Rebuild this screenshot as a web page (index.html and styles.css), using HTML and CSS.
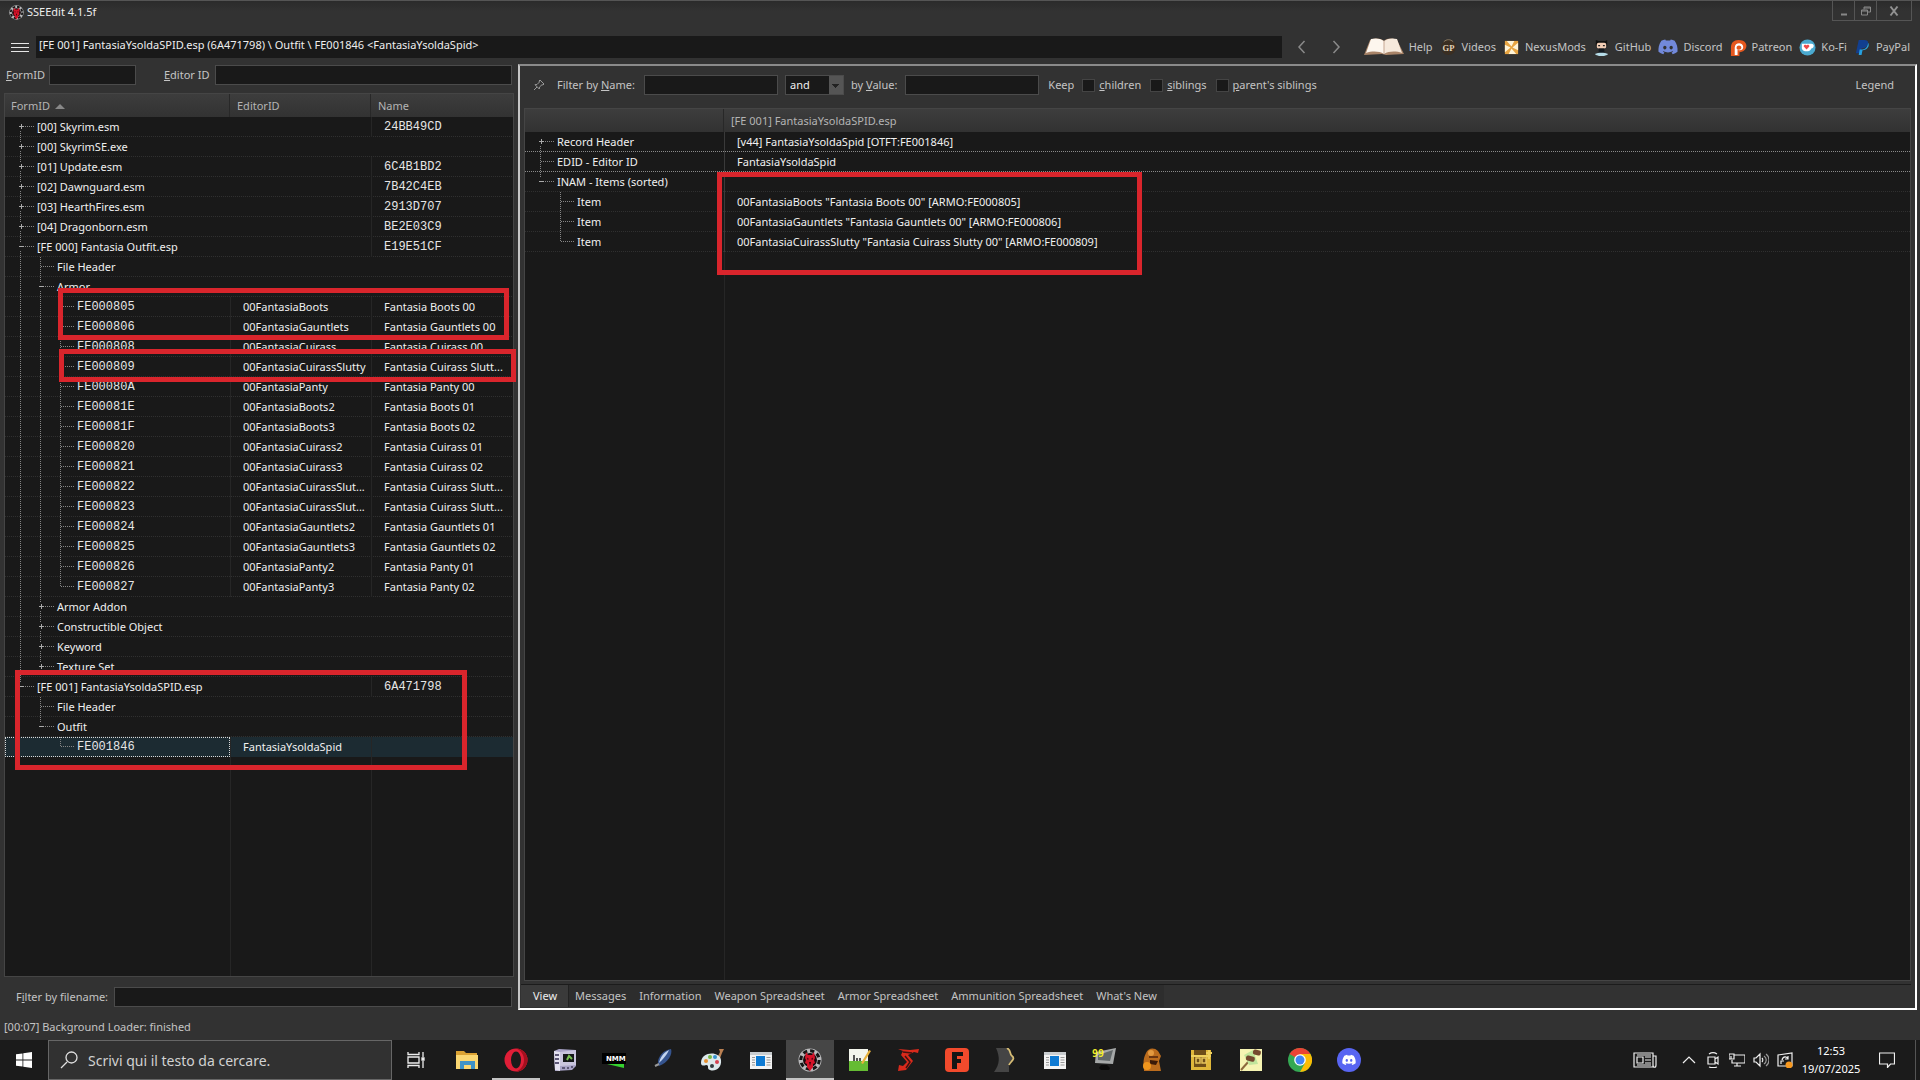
FILE: index.html
```html
<!DOCTYPE html>
<html lang="en">
<head>
<meta charset="utf-8">
<title>SSEEdit 4.1.5f</title>
<link rel="stylesheet" href="styles.css">
</head>
<body>
<svg class="defs" width="0" height="0" aria-hidden="true">
  <symbol id="gear" viewBox="0 0 24 24"><circle cx="12" cy="12" r="11.500" fill="#b9b9bb"/><circle cx="12" cy="12" r="9.200" fill="none" stroke="#161616" stroke-width="3" stroke-dasharray="4.200 3"/><circle cx="12" cy="12" r="7" fill="#1b0a0d"/><path d="M8 4l2 3h4l2-3 1 6-1 2 1 3-2 1v3l-3 4-3-4v-3l-2-1 1-3-1-2z" fill="#d51329"/><path d="M9 9.500l2 1.500-1.500 1zM15 9.500L13 11l1.500 1zM11 14h2l-1 4z" fill="#3a040c"/></symbol>
  <symbol id="discord" viewBox="0 0 24 24"><path d="M20 4.600A19 19 0 0 0 15.300 3l-.7 1.300a17 17 0 0 0-5.200 0L8.700 3A19 19 0 0 0 4 4.600C1 9 .2 13.400.6 17.700A19 19 0 0 0 6.400 20.600l1.300-2-1.900-1 .5-.4a13.500 13.500 0 0 0 11.400 0l.5.4-1.900 1 1.300 2a19 19 0 0 0 5.800-2.900C23.900 12.700 22.600 8.400 20 4.600zM8.200 15c-1.100 0-2-1-2-2.300s.9-2.300 2-2.300 2.100 1 2 2.300c0 1.300-.9 2.300-2 2.300zm7.600 0c-1.100 0-2-1-2-2.300s.9-2.300 2-2.300 2.100 1 2 2.300c0 1.300-.9 2.300-2 2.300z"/></symbol>
  <symbol id="window" viewBox="0 0 24 24"><rect x="1" y="4" width="22" height="17" fill="#f3f3f3"/><rect x="1" y="4" width="22" height="3" fill="#c9cdd0"/><rect x="7" y="8" width="9" height="10" fill="#0e7ad3"/><path d="M3 9.500h3M3 12h3M3 14.500h3M3 17h3M17.500 9.500h4M17.500 12h4M17.500 14.500h4M17.500 17h4" stroke="#999"/></symbol>
</svg>

<header class="titlebar">
  <svg class="app-icon"><use href="#gear"/></svg>
  <h1>SSEEdit 4.1.5f</h1>
  <div class="window-buttons">
    <button aria-label="Minimize"><svg viewBox="0 0 12 12"><path d="M3 9.500h6" stroke="#888" stroke-width="2"/></svg></button>
    <button aria-label="Restore"><svg viewBox="0 0 12 12" fill="none" stroke="#888"><path d="M1.500 5h6v5h-6zM1.500 6h6M4 4.500V2h6.500v5H8M4 3h6.500"/></svg></button>
    <button class="close" aria-label="Close"><svg viewBox="0 0 12 12"><path d="M2.500 1.500l7 9M9.500 1.500l-7 9" stroke="#929292" stroke-width="2"/></svg></button>
  </div>
</header>

<nav class="toolbar">
  <button class="menu" aria-label="Menu"><i></i><i></i><i></i></button>
  <input class="path" aria-label="Path" value="[FE 001] FantasiaYsoldaSPID.esp (6A471798) \ Outfit \ FE001846 &lt;FantasiaYsoldaSpid&gt;">
  <div class="history">
    <button aria-label="Back"><svg viewBox="0 0 10 14"><path d="M7.500 1L2 7l5.500 6"/></svg></button>
    <button aria-label="Forward"><svg viewBox="0 0 10 14"><path d="M2.500 1L8 7l-5.500 6"/></svg></button>
  </div>
  <div class="links">
    <a href="#help"><svg class="book" viewBox="0 0 40 18"><path d="M6 2L0 17l18-1 4 1 18-1L33 2c-5-2-10-2-13 1C16 0 11 0 6 2z" fill="#a98468"/><path d="M7 1L2 15c6-2 13-2 18 1V3C16 0 11 0 7 1z" fill="#fdf6ee"/><path d="M33 1l5 14c-6-2-13-2-18 1V3c4-3 9-3 13-2z" fill="#f6e9dc"/><path d="M20 3v13" stroke="#c6a893"/></svg>Help</a>
    <a href="#videos"><svg viewBox="0 0 18 18"><circle cx="9" cy="9" r="8" fill="#3a2e22"/><path d="M4 3c3-3 7-3 10 0" stroke="#8e7c62" fill="none"/><text x="9" y="13" text-anchor="middle" class="gp">GP</text></svg>Videos</a>
    <a href="#nexus"><svg viewBox="0 0 18 18"><rect x="2" y="2" width="14" height="14" fill="#e8a542"/><path d="M4 2l5 6 3-6zM16 4l-6 5 6 3zM14 16l-5-6-3 6zM2 14l6-5-6-3z" fill="#fff4d8"/></svg>NexusMods</a>
    <a class="github" href="#github"><svg viewBox="0 0 18 18"><path d="M3 1l3 1h7l2-1v7H3z" fill="#111"/><rect x="4" y="4" width="10" height="6" rx="2" fill="#f2cdb5"/><path d="M5.500 7h2M10.500 7h2" stroke="#222" stroke-width="1.500"/><path d="M6 10h6v6H6z" fill="#141a20"/><path d="M2 16c4-2 10-2 14 0-3 3-11 3-14 0z" fill="#b6dce8"/></svg>GitHub</a>
    <a href="#discord"><svg class="wide blurple"><use href="#discord"/></svg>Discord</a>
    <a href="#patreon"><svg viewBox="0 0 18 18"><path d="M1 9C1 4 4 1 9 1c12 0 10 13 1 13v4H1z" fill="#e5571e"/><path d="M5 17V9c0-6 9-6 9-.5C14 12 10 13 8 11v6z" fill="#fff"/><path d="M7 9c0-3 5-3 5 0s-4 3-5 1z" fill="#e5571e"/></svg>Patreon</a>
    <a href="#kofi"><svg viewBox="0 0 18 18"><circle cx="9" cy="9" r="8.500" fill="#4aa9cf"/><path d="M3 5h10c4 0 3 5 0 5-1 4-9 4-10 0z" fill="#fff"/><path d="M8 11L5 8c0-3 3-2 3-1 0-1 3-2 3 1z" fill="#ee4b4b"/></svg>Ko-Fi</a>
    <a href="#paypal"><svg viewBox="0 0 18 18"><path d="M5 1h6c4 0 5 3 3 6s-4 3-6 3l-1 5H2z" fill="#123f90"/><path d="M15 4c2 3-1 8-6 8l-1 5H5l1-6h3c3 0 5-2 6-7z" fill="#26a0e0"/></svg>PayPal</a>
  </div>
</nav>

<main>
<section class="left">
  <form class="id-filters">
    <label for="formid"><u>F</u>ormID</label><input id="formid" class="formid">
    <label for="editorid" class="second"><u>E</u>ditor ID</label><input id="editorid" class="grow">
  </form>
  <div class="grid-box">
    <table class="files">
      <colgroup><col class="c1"><col class="c2"><col></colgroup>
      <thead><tr><th>FormID <i class="sort"></i></th><th>EditorID</th><th>Name</th></tr></thead>
      <tbody>
      <tr><td colspan="2"><div class="node"><i class="b plus first"></i>[00] Skyrim.esm</div></td><td class="mono">24BB49CD</td></tr>
      <tr><td colspan="3"><div class="node"><i class="b plus"></i>[00] SkyrimSE.exe</div></td></tr>
      <tr><td colspan="2"><div class="node"><i class="b plus"></i>[01] Update.esm</div></td><td class="mono">6C4B1BD2</td></tr>
      <tr><td colspan="2"><div class="node"><i class="b plus"></i>[02] Dawnguard.esm</div></td><td class="mono">7B42C4EB</td></tr>
      <tr><td colspan="2"><div class="node"><i class="b plus"></i>[03] HearthFires.esm</div></td><td class="mono">2913D707</td></tr>
      <tr><td colspan="2"><div class="node"><i class="b plus"></i>[04] Dragonborn.esm</div></td><td class="mono">BE2E03C9</td></tr>
      <tr><td colspan="2"><div class="node"><i class="b minus"></i>[FE 000] Fantasia Outfit.esp</div></td><td class="mono">E19E51CF</td></tr>
      <tr><td colspan="3"><div class="node"><i class="g"></i><i class="b"></i>File Header</div></td></tr>
      <tr><td colspan="3"><div class="node"><i class="g"></i><i class="b minus"></i>Armor</div></td></tr>
      <tr><td><div class="node mono"><i class="g"></i><i class="g"></i><i class="b"></i>FE000805</div></td><td>00FantasiaBoots</td><td>Fantasia Boots 00</td></tr>
      <tr><td><div class="node mono"><i class="g"></i><i class="g"></i><i class="b"></i>FE000806</div></td><td>00FantasiaGauntlets</td><td>Fantasia Gauntlets 00</td></tr>
      <tr><td><div class="node mono"><i class="g"></i><i class="g"></i><i class="b"></i>FE000808</div></td><td>00FantasiaCuirass</td><td>Fantasia Cuirass 00</td></tr>
      <tr><td><div class="node mono"><i class="g"></i><i class="g"></i><i class="b"></i>FE000809</div></td><td>00FantasiaCuirassSlutty</td><td>Fantasia Cuirass Slutt...</td></tr>
      <tr><td><div class="node mono"><i class="g"></i><i class="g"></i><i class="b"></i>FE00080A</div></td><td>00FantasiaPanty</td><td>Fantasia Panty 00</td></tr>
      <tr><td><div class="node mono"><i class="g"></i><i class="g"></i><i class="b"></i>FE00081E</div></td><td>00FantasiaBoots2</td><td>Fantasia Boots 01</td></tr>
      <tr><td><div class="node mono"><i class="g"></i><i class="g"></i><i class="b"></i>FE00081F</div></td><td>00FantasiaBoots3</td><td>Fantasia Boots 02</td></tr>
      <tr><td><div class="node mono"><i class="g"></i><i class="g"></i><i class="b"></i>FE000820</div></td><td>00FantasiaCuirass2</td><td>Fantasia Cuirass 01</td></tr>
      <tr><td><div class="node mono"><i class="g"></i><i class="g"></i><i class="b"></i>FE000821</div></td><td>00FantasiaCuirass3</td><td>Fantasia Cuirass 02</td></tr>
      <tr><td><div class="node mono"><i class="g"></i><i class="g"></i><i class="b"></i>FE000822</div></td><td>00FantasiaCuirassSlut...</td><td>Fantasia Cuirass Slutt...</td></tr>
      <tr><td><div class="node mono"><i class="g"></i><i class="g"></i><i class="b"></i>FE000823</div></td><td>00FantasiaCuirassSlut...</td><td>Fantasia Cuirass Slutt...</td></tr>
      <tr><td><div class="node mono"><i class="g"></i><i class="g"></i><i class="b"></i>FE000824</div></td><td>00FantasiaGauntlets2</td><td>Fantasia Gauntlets 01</td></tr>
      <tr><td><div class="node mono"><i class="g"></i><i class="g"></i><i class="b"></i>FE000825</div></td><td>00FantasiaGauntlets3</td><td>Fantasia Gauntlets 02</td></tr>
      <tr><td><div class="node mono"><i class="g"></i><i class="g"></i><i class="b"></i>FE000826</div></td><td>00FantasiaPanty2</td><td>Fantasia Panty 01</td></tr>
      <tr><td><div class="node mono"><i class="g"></i><i class="g"></i><i class="b last"></i>FE000827</div></td><td>00FantasiaPanty3</td><td>Fantasia Panty 02</td></tr>
      <tr><td colspan="3"><div class="node"><i class="g"></i><i class="b plus"></i>Armor Addon</div></td></tr>
      <tr><td colspan="3"><div class="node"><i class="g"></i><i class="b plus"></i>Constructible Object</div></td></tr>
      <tr><td colspan="3"><div class="node"><i class="g"></i><i class="b plus"></i>Keyword</div></td></tr>
      <tr><td colspan="3"><div class="node"><i class="g"></i><i class="b plus last"></i>Texture Set</div></td></tr>
      <tr><td colspan="2"><div class="node"><i class="b minus last"></i>[FE 001] FantasiaYsoldaSPID.esp</div></td><td class="mono">6A471798</td></tr>
      <tr><td colspan="3"><div class="node"><i class="g none"></i><i class="b"></i>File Header</div></td></tr>
      <tr><td colspan="3"><div class="node"><i class="g none"></i><i class="b minus last"></i>Outfit</div></td></tr>
      <tr class="selected"><td class="focus"><div class="node mono"><i class="g none"></i><i class="g none"></i><i class="b last"></i>FE001846</div></td><td>FantasiaYsoldaSpid</td><td></td></tr>
      </tbody>
    </table>
    <div class="filler files-filler"><i></i><i></i><i></i></div>
  </div>
  <form class="file-filter"><label for="fname">F<u>i</u>lter by filename:</label><input id="fname" class="grow"></form>
</section>

<section class="right">
  <form class="filters">
    <svg class="pin" viewBox="0 0 12 12"><path d="M7 1l4 4-1 1-1-.3L6.500 8l-.2 2L2 5.700l2-.2L6.500 3 6 2zM4 8l-3 3"/></svg>
    <label class="by-name" for="fn">Filter by <u>N</u>ame:</label><input id="fn" class="term">
    <select aria-label="Operator"><option>and</option></select>
    <label class="by-value" for="fv">by <u>V</u>alue:</label><input id="fv" class="term">
    <span class="keep">Keep</span>
    <label class="check"><input type="checkbox"><span><u>c</u>hildren</span></label>
    <label class="check"><input type="checkbox"><span><u>s</u>iblings</span></label>
    <label class="check"><input type="checkbox"><span><u>p</u>arent's siblings</span></label>
    <button type="button" class="legend">Legend</button>
  </form>
  <div class="grid-box record-box">
    <table class="record">
      <colgroup><col class="r1"><col></colgroup>
      <thead><tr><th></th><th>[FE 001] FantasiaYsoldaSPID.esp</th></tr></thead>
      <tbody>
      <tr class="bright"><td><div class="node"><i class="b plus first"></i>Record Header</div></td><td>[v44] FantasiaYsoldaSpid [OTFT:FE001846]</td></tr>
      <tr class="bright"><td><div class="node"><i class="b"></i>EDID - Editor ID</div></td><td>FantasiaYsoldaSpid</td></tr>
      <tr><td><div class="node"><i class="b minus last"></i>INAM - Items (sorted)</div></td><td></td></tr>
      <tr><td><div class="node"><i class="g none"></i><i class="b"></i>Item</div></td><td>00FantasiaBoots "Fantasia Boots 00" [ARMO:FE000805]</td></tr>
      <tr><td><div class="node"><i class="g none"></i><i class="b"></i>Item</div></td><td>00FantasiaGauntlets "Fantasia Gauntlets 00" [ARMO:FE000806]</td></tr>
      <tr><td><div class="node"><i class="g none"></i><i class="b last"></i>Item</div></td><td>00FantasiaCuirassSlutty "Fantasia Cuirass Slutty 00" [ARMO:FE000809]</td></tr>
      </tbody>
    </table>
    <div class="filler record-filler"><i></i><i></i></div>
  </div>
  <div class="tabs">
    <button class="active">View</button><button>Messages</button><button>Information</button><button>Weapon Spreadsheet</button><button>Armor Spreadsheet</button><button>Ammunition Spreadsheet</button><button>What's New</button>
  </div>
</section>
</main>

<p class="status">[00:07] Background Loader: finished</p>

<footer class="taskbar">
  <button class="start" aria-label="Start"><svg viewBox="0 0 16 16" fill="#fff"><path d="M0 2.300L6.500 1.400v6.200H0zM7.300 1.300L16 0v7.600H7.300zM0 8.400h6.500v6.200L0 13.700zM7.300 8.400H16V16l-8.700-1.300z"/></svg></button>
  <label class="search"><svg viewBox="0 0 18 18"><path d="M1 17l6-6M17 6.500a5.500 5.500 0 1 1-11 0 5.500 5.500 0 0 1 11 0z"/></svg><input aria-label="Search" placeholder="Scrivi qui il testo da cercare."></label>
  <button class="taskview" aria-label="Task view"><svg viewBox="0 0 18 18" fill="none" stroke="#eee" stroke-width="1.300"><path d="M1 1v2.500h11V1M1 17v-2.500h11V17M1 6h11v6H1zM16 1v5M16 10v7"/><path d="M15 7h2v2h-2z" fill="#eee"/></svg></button>
  <div class="apps">
    <button aria-label="File Explorer"><svg viewBox="0 0 24 24"><path d="M1 3h8l2 2h11v16H1z" fill="#dba233"/><path d="M1 7h22v14H1z" fill="#fbd772"/><path d="M5 21v-8h15v8h-4v-4h-7v4z" fill="#3f93c8"/></svg></button>
    <button class="running" aria-label="Opera"><svg viewBox="0 0 24 24"><circle cx="12" cy="12" r="11.500" fill="#e01e37"/><path d="M12 .5a11.500 11.500 0 0 1 0 23c5-2 8-6 8-11.500S17 2.500 12 .5z" fill="#a3101f"/><ellipse cx="12" cy="12" rx="5" ry="8.500" fill="#1b1b1b"/></svg></button>
    <button aria-label="Media tool"><svg viewBox="0 0 24 24"><path d="M1 3l5-2 17 1v16l-4 4-17 1z" fill="#a9a4c8"/><path d="M1 3l6 1v19l-5-1z" fill="#e4e2f0"/><path d="M7 4l16-2v15l-16 1z" fill="#c9c5de"/><rect x="10" y="6" width="11" height="8" fill="#15181a"/><path d="M14 12l2-4 3 3" stroke="#79c253" fill="none" stroke-width="2"/><path d="M2 7h4M2 11h4M2 15h4M9 20h3M14 20h2M18 19h2" stroke="#5d5877" stroke-width="2"/></svg></button>
    <button aria-label="NMM"><svg viewBox="0 0 24 24"><path d="M0 5h24v11H0z" fill="#000"/><text class="nmm" x="4" y="13">NMM</text><path d="M5 16h17v4z" fill="#36d32f"/></svg></button>
    <button aria-label="Quill"><svg viewBox="0 0 24 24"><path d="M20 1c2 5-3 14-12 17-3-3 0-15 12-17z" fill="#35548f"/><path d="M18 2c-6 3-9 8-10 13 3-3 8-8 10-13z" fill="#c3d5f0"/><path d="M4 18l4-2" stroke="#999" stroke-width="2"/></svg></button>
    <button aria-label="Paint"><svg viewBox="0 0 24 24"><path d="M17 10l3-6-1-3h5l-2 4-3 8z" fill="#ba8052"/><path d="M1 15C1 3 20 3 21 12c1 8-6 12-11 10-4-1 0-5-4-5-2 1-5 1-5-2z" fill="#dce8ec"/><circle cx="6" cy="13" r="2" fill="#e68f30"/><circle cx="10" cy="9" r="2" fill="#73b745"/><circle cx="15" cy="9" r="2" fill="#3792ce"/><circle cx="17" cy="14" r="2" fill="#d44252"/><circle cx="12" cy="18" r="2" fill="#323b40"/></svg></button>
    <button aria-label="Application"><svg><use href="#window"/></svg></button>
    <button class="running current" aria-label="SSEEdit"><svg><use href="#gear"/></svg></button>
    <button aria-label="Text editor"><svg viewBox="0 0 24 24"><path d="M2 1h19v22H2z" fill="#f3f6ec"/><path d="M2 13h19v10H2z" fill="#65bc33"/><path d="M7 7v6M10 10v3M13 10v3" stroke="#222" stroke-width="1.500"/><path d="M14 15l8-13 2 1-8 13z" fill="#e8b33d"/></svg></button>
    <button aria-label="Skyrim tool"><svg viewBox="0 0 24 24"><path d="M2 1l12 1 9-1-1 4-4-1-6 3 5 6-7 9-8 1 1-6 4 1 4-4-6-7 2-4z" fill="#d92a1c"/><path d="M7 4l9 1M9 8l5 6-4 6" stroke="#40120f" fill="none" stroke-width="1.500"/></svg></button>
    <button aria-label="FNIS"><svg viewBox="0 0 24 24"><rect width="24" height="24" rx="4" fill="#f24a2c"/><path d="M7 4h11v4h-6v3h4v4h-4v6H7z" fill="#151515"/></svg></button>
    <button aria-label="BodySlide"><svg viewBox="0 0 24 24"><path d="M2 0h12c4 4 2 7 4 9 3 3-4 6-3 9v6H0c6-8 6-15 2-24z" fill="#454545"/><path d="M13 0c5 3 2 6 5 8 4 3-2 6-3 9" stroke="#d7bd75" stroke-width="1.800" fill="none"/></svg></button>
    <button aria-label="Application"><svg><use href="#window"/></svg></button>
    <button aria-label="Fraps"><svg viewBox="0 0 24 24"><path d="M4 4l20-4-3 16-18-1z" fill="#a5a8a8"/><path d="M6 7l15-5-3 11-12-1z" fill="#62686a"/><path d="M7 20l2-3h6l3 3-1 2H9z" fill="#0a0a0a"/><text class="fps" x="0" y="9">99</text></svg></button>
    <button aria-label="Game tool"><svg viewBox="0 0 24 24"><path d="M5 5c2-5 8-6 12-2l3 5-2 5 2 10H3c0-6-2-10 2-18z" fill="#bb6c1d"/><path d="M9 12l8 1-2 4-6-1z" fill="#3b1a08"/><path d="M8 9h9" stroke="#6a3510" stroke-width="2"/><circle cx="10" cy="5" r="3" fill="#e39a40"/><circle cx="6" cy="18" r="4" fill="#ee951d"/></svg></button>
    <button aria-label="Chest"><svg viewBox="0 0 24 24"><path d="M1 2h20v20H1z" fill="#dfb73a"/><path d="M4 2h12v17H4z" fill="#6d4e19"/><path d="M1 8h20M19 2v9M16 5h6" stroke="#eed05e" stroke-width="2"/><path d="M6 10h4v5H6zM12 10h4v5h-4z" stroke="#e6c55b" fill="none" stroke-width="1.500"/></svg></button>
    <button aria-label="Cinema tool"><svg viewBox="0 0 24 24"><path d="M1 1h22v22H1z" fill="#f6f4b3"/><path d="M2 22l8-9" stroke="#8c693c" stroke-width="2"/><path d="M5 7l9-5 5 14-9 1z" fill="#c1e59c"/><rect x="7" y="8" width="9" height="5" rx="2" fill="#75482f" transform="rotate(15 11 10)"/><rect x="14" y="2" width="8" height="5" rx="2" fill="#75482f" transform="rotate(15 18 4)"/></svg></button>
    <button aria-label="Chrome"><svg viewBox="0 0 24 24"><circle cx="12" cy="12" r="12" fill="#34a853"/><path d="M12 12L1.600 6A12 12 0 0 1 22.400 6z" fill="#ea4335"/><path d="M12 6h10.400A12 12 0 0 1 12 24l5-9z" fill="#fbbc05"/><circle cx="12" cy="12" r="5.800" fill="#fff"/><circle cx="12" cy="12" r="4.500" fill="#4285f4"/></svg></button>
    <button aria-label="Discord"><svg viewBox="0 0 24 24"><circle cx="12" cy="12" r="12" fill="#5865f2"/><use href="#discord" x="5" y="5" width="14" height="14" fill="#fff"/></svg></button>
  </div>
  <div class="tray">
    <svg class="news" viewBox="0 0 24 16"><path d="M1 1h19v14H1zM20 4h3v9c0 3-3 3-3 0M4 5h6v6H4zM12 5h6M12 8h6M12 11h6M4 3h14M4 13h14"/></svg>
    <svg viewBox="0 0 16 16"><path d="M2 11l6-6 6 6"/></svg>
    <svg viewBox="0 0 16 16"><path d="M3 5h7v7H3zM10 7l3-2v7l-3-2M4 2c3-2 5-2 8 0M4 15c3 1 5 1 8 0"/></svg>
    <svg viewBox="0 0 16 16"><path d="M5 3h11v8H3V8M8 11v3M5 14h7M0 2h5v5H0zM2 4v3"/></svg>
    <svg viewBox="0 0 16 16"><path d="M1 6h2l4-4v12l-4-4H1zM9 6c1 1 1 3 0 4"/><path d="M11 4c3 2 3 6 0 8M13 2c4 3 4 9 0 12" opacity=".6"/></svg>
    <svg viewBox="0 0 16 16"><path d="M1 3l14-2v13H1zM5 8c1-4 5-4 6-1M11 4v3H8M4 12V9h3"/><circle cx="12" cy="13" r="3.500" class="dot"/></svg>
    <time>12:53<br>19/07/2025</time>
    <svg class="notify" viewBox="0 0 16 16"><path d="M0.500 1h15v11h-4l-3 3.500v-3.500h-8z"/></svg>
  </div>
  <i class="show-desktop"></i>
</footer>

<div class="mark mark-boots"></div>
<div class="mark mark-cuirass"></div>
<div class="mark mark-plugin"></div>
<div class="mark mark-items"></div>
</body>
</html>
```
FILE: styles.css
```css
* { box-sizing: border-box; }
body {
  margin: 0; min-height: 100vh; display: flex; flex-direction: column; position: relative;
  background: #323232; color: #c4c4c4;
  font: 11px/16px "Noto Sans", "Open Sans", sans-serif;
}
button, input, select { font: inherit; color: inherit; margin: 0; padding: 0; border: 0; background: none; border-radius: 0; }
input { background: #191919; border: 1px solid #4b4b4b; height: 20px; padding: 0 4px; min-width: 0; }
form { margin: 0; display: flex; align-items: center; }
svg { display: block; flex: none; }
.defs { position: absolute; }
.grow { flex: 1; }

.titlebar { display: flex; align-items: flex-start; height: 36px; border-top: 1px solid #555; padding-right: 8px; background: linear-gradient(#2b2b2b, #323232 10px); }
.app-icon { width: 15px; height: 15px; margin: 4px 3px 0 9px; }
h1 { margin: 3px 0 0; font-size: 11px; font-weight: 400; color: #eee; }
.window-buttons { margin-left: auto; display: flex; border: 1px solid #555; border-top: 0; }
.window-buttons button { width: 22px; height: 19px; display: grid; place-items: center; border-right: 1px solid #555; }
.window-buttons .close { width: 34px; border-right: 0; }
.window-buttons svg { width: 12px; height: 12px; }

.toolbar { display: flex; align-items: center; height: 22px; padding-right: 10px; }
.menu { width: 36px; height: 22px; padding: 7px 7px 0 11px; display: flex; flex-direction: column; gap: 3px; }
.menu i { height: 1px; background: #e6e6e6; width: 18px; flex: none; }
.path { flex: 1; height: 22px; border: 0; padding: 0 3px 6px; color: #eee; }
.history { display: flex; gap: 24px; padding: 0 23px 0 15px; }
.history svg { width: 10px; height: 14px; fill: none; stroke: #8a8a8a; stroke-width: 1.500; }
.links { display: flex; align-items: center; gap: 7px; }
.links a { display: flex; align-items: center; gap: 5px; color: #c4c4c4; text-decoration: none; }
.links svg { width: 17px; height: 17px; }
.links .book { width: 40px; height: 18px; }
.links .wide { width: 20px; height: 20px; }
.blurple { fill: #7289da; }
.gp { font: bold 9px "Liberation Serif", serif; fill: #e2d5bb; }

main { flex: 1; display: grid; grid-template-columns: 518px 1fr; padding: 6px 3px 0 0; }
.left { display: flex; flex-direction: column; padding: 0 4px 3px; }
.id-filters { height: 21px; padding: 0 2px; }
.formid { width: 87px; margin-left: 4px; }
.second { margin: 0 5px 0 28px; }
.grid-box { flex: 1; display: flex; flex-direction: column; background: #191919; border: 1px solid #454545; }
.left .grid-box { margin-top: 8px; }
.file-filter { margin-top: 10px; padding: 0 2px 0 12px; gap: 6px; }

table { width: 100%; border-collapse: separate; border-spacing: 0; table-layout: fixed; color: #f0f0f0; }
.c1 { width: 225px; }
.c2 { width: 141px; }
.r1 { width: 199px; }
th { height: 23px; padding: 0 7px; text-align: left; font-weight: 400; color: #b4b4b4; background: linear-gradient(#3d3d3d, #323232); border-right: 1px solid #282828; }
th:first-child { padding-left: 6px; }
th:last-child { border-right: 0; }
.sort { display: inline-block; margin-left: 2px; border: 5px solid transparent; border-top: 0; border-bottom: 5px solid #888; vertical-align: 1px; }
td { height: 20px; padding: 0 0 0 12px; white-space: nowrap; overflow: hidden; }
td:first-child { padding-left: 5px; }
td + td { border-left: 1px solid #262626; }
tbody tr { background: repeating-linear-gradient(to right, #303030 0 1px, transparent 1px 2px) 0 100% / 100% 1px no-repeat; }
tbody .bright { background-image: repeating-linear-gradient(to right, #8a8a8a 0 1px, transparent 1px 2px); }
tbody .selected { background: #1c2b32; }
.focus { outline: 1px dotted #d8d8d8; outline-offset: -1px; }
.mono { font: 12px/16px "Liberation Mono", monospace; color: #e6e6e6; }

/* tree guides */
.node { display: flex; align-items: center; height: 20px; }
.node i { --dv: repeating-linear-gradient(#858585 0 1px, transparent 1px 2px); --dh: repeating-linear-gradient(to right, #858585 0 1px, transparent 1px 2px); flex: none; height: 20px; background-repeat: no-repeat; }
.g { width: 20px; background-image: var(--dv); background-size: 1px 20px; background-position: 10px 0; }
.g.none { background-image: none; }
.b { width: 27px; background-image: var(--dv), var(--dh); background-size: 1px 20px, 13px 1px; background-position: 10px 0, 11px 9px; }
.b.last { background-size: 1px 10px, 13px 1px; }
.b.first { background-position: 10px 10px, 11px 9px; }
.plus, .minus { position: relative; }
.plus::before, .minus::before { content: ""; position: absolute; left: 9px; top: 6px; width: 6px; height: 7px; background: linear-gradient(#aaa, #aaa) 0 3px / 5px 1px no-repeat #191919; }
.plus::after { content: ""; position: absolute; left: 11px; top: 7px; width: 1px; height: 5px; background: #aaa; }
.filler { flex: 1; display: flex; }
.filler i + i { border-left: 1px solid #262626; flex: 1; }
.files-filler i:first-child { width: 225px; }
.files-filler i:nth-child(2) { flex: none; width: 141px; }
.record-filler i:first-child { width: 199px; }

.right { display: flex; flex-direction: column; border: 2px solid #fff; border-top-color: #8b8b8b; border-left-color: #c6c6c6; padding: 0 4px; }
.filters { height: 42px; padding: 0 17px 4px 9px; }
.pin { width: 12px; height: 12px; margin-right: 12px; fill: none; stroke: #999; }
.by-name { margin-right: 9px; }
.term { width: 134px; }
.filters select { width: 59px; height: 20px; margin: 0 7px; padding: 0 4px; color: #eee; border: 1px solid #4b4b4b; appearance: none;
  background: linear-gradient(45deg, transparent 50%, #222 50%) 45px 8px / 4px 4px no-repeat, linear-gradient(-45deg, transparent 50%, #222 50%) 49px 8px / 4px 4px no-repeat, linear-gradient(#555, #555) 100% 0 / 14px 18px no-repeat #191919; }
.by-value { margin-right: 8px; }
.keep { margin: 0 8px 0 9px; }
.check { display: flex; align-items: center; gap: 4px; margin-right: 9px; }
.check input { appearance: none; width: 13px; height: 13px; border: 1px solid #444; }
.legend { margin-left: auto; }
.record-box { margin-bottom: 3px; }
.record td + td { border-left-color: #3a3a3a; }
.tabs { display: flex; height: 24px; border-top: 1px solid #1c1c1c; padding-bottom: 1px; margin-left: -3px; }
.tabs button { padding: 0 7px 0 6px; background: #2d2d2d; }
.tabs .active { background: #3a3a3a; color: #eee; padding: 0 11px 0 12px; border-right: 1px solid #222; }

.status { margin: 0; height: 30px; padding: 9px 4px 0; }

.taskbar { display: flex; height: 40px; background: #1b1b1b; padding-right: 4px; }
.taskbar button { display: grid; place-items: center; width: 48px; height: 40px; }
.start svg { width: 16px; height: 16px; }
.search { width: 344px; display: flex; align-items: center; gap: 6px; padding-left: 11px; background: #313131; border: 1px solid #666; }
.search svg { width: 18px; height: 18px; fill: none; stroke: #e0e0e0; stroke-width: 1.300; }
.search input { flex: 1; border: 0; background: none; font-size: 14px; height: 24px; }
.search input::placeholder { color: #d2d2d2; opacity: 1; }
.taskview svg { width: 18px; height: 18px; }
.apps { display: flex; gap: 1px; margin-left: 3px; }
.apps svg { width: 24px; height: 24px; }
.taskbar .running { border-bottom: 2px solid #c4c4c4; padding-top: 2px; }
.current { background: #464646; }
.fps { font: bold 10px "DejaVu Sans Mono", monospace; fill: #f2ef2b; }
.nmm { font: bold 7px "DejaVu Sans", sans-serif; fill: #fff; }
.tray { margin-left: auto; display: flex; align-items: center; gap: 8px; padding-right: 20px; color: #fff; }
.tray svg { width: 16px; height: 16px; fill: none; stroke: #f0f0f0; stroke-width: 1.200; }
.tray .news { width: 24px; margin-right: 16px; }
.tray .dot { fill: #f7981f; stroke: none; }
.tray time { width: 60px; text-align: center; line-height: 18px; }
.tray .notify { margin-left: 10px; }
.show-desktop { border-left: 1px solid #555; }

/* highlight boxes */
.mark { position: absolute; border: 5px solid #d9252c; pointer-events: none; }
.mark-boots { left: 58px; top: 288px; width: 451px; height: 52px; }
.mark-cuirass { left: 59px; top: 349px; width: 457px; height: 33px; }
.mark-plugin { left: 15px; top: 670px; width: 452px; height: 100px; }
.mark-items { left: 717px; top: 172px; width: 425px; height: 103px; }
```
